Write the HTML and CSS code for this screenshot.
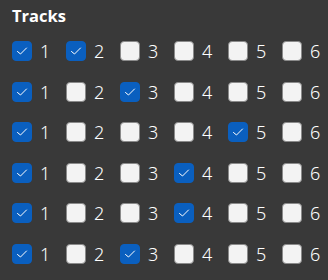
FILE: index.html
```html
<!DOCTYPE html>
<html lang="en">
<head>
    <meta charset="UTF-8">
    <title>Tracks</title>
    <link rel="stylesheet" href="styles.css">
</head>
<body>
    <div class="panel">
        <h2 class="title">Tracks</h2>
        <div class="grid" id="grid"></div>
    </div>

    <script>
        // which tracks are checked on each row
        const rows = [
            [1, 2],
            [1, 3],
            [1, 5],
            [1, 4],
            [1, 4],
            [1, 3]
        ];
        const grid = document.getElementById('grid');
        const check = '<svg viewBox="0 0 20 20" width="20" height="20"><polyline points="5.5,10.5 8.5,13 14.5,7" fill="none" stroke="#fff" stroke-width="1" stroke-linecap="round" stroke-linejoin="round"/></svg>';

        rows.forEach(function(on) {
            for (let n = 1; n <= 6; n++) {
                const item = document.createElement('label');
                item.className = 'item';
                const box = document.createElement('span');
                box.className = on.indexOf(n) >= 0 ? 'box checked' : 'box';
                if (on.indexOf(n) >= 0) box.innerHTML = check;
                const text = document.createElement('span');
                text.className = 'num';
                text.textContent = n;
                item.appendChild(box);
                item.appendChild(text);
                grid.appendChild(item);
            }
        });
    </script>
</body>
</html>
```

FILE: styles.css
```css
body {
    margin: 0;
    background-color: #393939;
    color: #fff;
    font-family: "Noto Sans", "Open Sans", sans-serif;
}

.panel {
    padding: 4px 12px 0 12px;
}

.title {
    margin: 0;
    font-family: "Open Sans", sans-serif;
    font-size: 16.5px;
    font-weight: 700;
    line-height: 24px;
}

.grid {
    display: grid;
    grid-template-columns: repeat(6, 54px);
    grid-auto-rows: 40.5px;
    margin-top: 3px;
}

.item {
    display: flex;
    align-items: center;
    gap: 8px;
}

.box {
    width: 18px;
    height: 18px;
    border: 1px solid #8a8a8a;
    border-radius: 4px;
    background-color: #f3f3f3;
    flex-shrink: 0;
}

.box svg {
    display: block;
    margin: -1px;
}

.box.checked {
    background-color: #0a5fbf;
    border-color: #0a5fbf;
}

.num {
    font-size: 18px;
    font-weight: 300;
    line-height: 20px;
}
```
